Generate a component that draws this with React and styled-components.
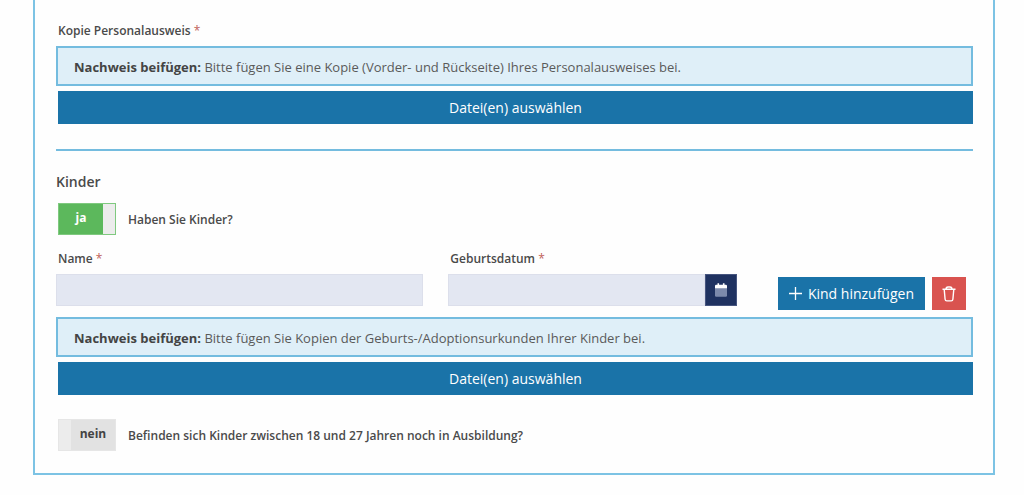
import { createGlobalStyle, styled } from 'styled-components'
import { useState } from 'react'

function UploadField({ children }) {
  return (
    <Upload>
      <Notice>
        <strong>Nachweis beifügen:</strong> {children}
      </Notice>
      <UploadButton type="button">Datei(en) auswählen</UploadButton>
    </Upload>
  )
}

function Toggle({ children, defaultOn }) {
  const [on, setOn] = useState(defaultOn)

  return (
    <ToggleRow>
      <Switch $on={on}>
        <Knob type="checkbox" checked={on} onChange={(e) => setOn(e.target.checked)} />
        <SwitchText>{on ? 'ja' : 'nein'}</SwitchText>
      </Switch>
      <ToggleLabel>{children}</ToggleLabel>
    </ToggleRow>
  )
}

export default function App() {
  const [name, setName] = useState('')
  const [birthday, setBirthday] = useState('')

  return (
    <>
      <GlobalStyle />
      <Panel>
        <Label as="div">
          Kopie Personalausweis <Required>*</Required>
        </Label>
        <UploadField>Bitte fügen Sie eine Kopie (Vorder- und Rückseite) Ihres Personalausweises bei.</UploadField>
        <Divider />
        <Heading>Kinder</Heading>
        <Toggle defaultOn={true}>Haben Sie Kinder?</Toggle>
        <ChildRow>
          <Field>
            <Label htmlFor="name">
              Name <Required>*</Required>
            </Label>
            <TextInput id="name" type="text" value={name} onChange={(e) => setName(e.target.value)} />
          </Field>
          <Field>
            <Label htmlFor="birthday">
              Geburtsdatum <Required>*</Required>
            </Label>
            <DateGroup>
              <TextInput id="birthday" type="text" value={birthday} onChange={(e) => setBirthday(e.target.value)} />
              <DateButton type="button" aria-label="Kalender öffnen">
                <svg width="12" height="14" viewBox="0 0 12 14">
                  <path d="M0 5h12v7.5a1.2 1.2 0 0 1-1.2 1.2H1.2A1.2 1.2 0 0 1 0 12.5z" fill="#7c8aab" />
                  <path d="M0 5.2V3a1.2 1.2 0 0 1 1.2-1.2h1.3V.3h1.600v1.500h3.800V.3h1.600v1.500h1.300A1.2 1.2 0 0 1 12 3v2.2z" fill="#fff" />
                </svg>
              </DateButton>
            </DateGroup>
          </Field>
          <Actions>
            <AddButton type="button">
              <svg width="13" height="13" viewBox="0 0 13 13" stroke="currentColor" strokeWidth="1.3">
                <path d="M6.5 0v13M0 6.5h13" />
              </svg>
              Kind hinzufügen
            </AddButton>
            <DeleteButton type="button" aria-label="Kind entfernen">
              <svg width="14" height="16" viewBox="0 0 14 16" fill="none" stroke="currentColor" strokeWidth="1.4">
                <path d="M.5 3.3h13M4 3.3c0-1.5.8-2.300 2-2.300h2c1.200 0 2 .8 2 2.300M2.200 3.300l.9 10c.1 1.1.7 1.6 1.7 1.6h4.400c1 0 1.600-.5 1.700-1.600l.9-10" />
              </svg>
            </DeleteButton>
          </Actions>
        </ChildRow>
        <UploadField>Bitte fügen Sie Kopien der Geburts-/Adoptionsurkunden Ihrer Kinder bei.</UploadField>
        <LastToggle>
          <Toggle defaultOn={false}>Befinden sich Kinder zwischen 18 und 27 Jahren noch in Ausbildung?</Toggle>
        </LastToggle>
      </Panel>
    </>
  )
}

const GlobalStyle = createGlobalStyle`
  * {
    box-sizing: border-box;
  }
  body {
    margin: 0;
    background: #fefefe;
    color: #4a4a4a;
    font-family: 'Open Sans', 'Noto Sans', sans-serif;
    font-size: 13px;
  }
  button,
  input {
    font-family: inherit;
  }
  button {
    cursor: pointer;
  }
  svg {
    display: block;
    flex: none;
  }
`

const Panel = styled.form`
  margin: 0 29px 20px 33px;
  padding: 21px 20px 22px 21px;
  border: 2px solid #7cc3e4;
  border-top: none;
`

const Label = styled.label`
  display: block;
  padding: 0 2px;
  font-size: 12px;
  font-weight: 600;
  line-height: 20px;
`

const Required = styled.span`
  color: #c0605a;
  font-weight: 400;
`

const Upload = styled.div`
  display: flex;
  flex-direction: column;
  gap: 5px;
  margin-top: 5px;
`

const Notice = styled.div`
  padding: 9px 16px 7px;
  border: 2px solid #74bcdf;
  background: #dfeff8;
  color: #5a5a5a;
  line-height: 20px;
  & strong {
    color: #444;
  }
`

const UploadButton = styled.button`
  height: 33px;
  margin-left: 2px;
  border: none;
  background: #1a73a8;
  color: #fff;
  font-size: 14px;
`

const Divider = styled.hr`
  height: 2px;
  margin: 25px 0 20px;
  border: none;
  background: #74bcdf;
`

const Heading = styled.h2`
  margin: 0 0 10px;
  font-size: 14px;
  font-weight: 600;
  line-height: 22px;
`

const ToggleRow = styled.label`
  display: flex;
  align-items: center;
  gap: 12px;
  margin-left: 2px;
  cursor: pointer;
`

const Switch = styled.span`
  display: flex;
  flex-direction: ${(props) => (props.$on ? 'row-reverse' : 'row')};
  width: 58px;
  height: 32px;
  border: 1px solid ${(props) => (props.$on ? '#7fc97f' : '#e6e6e6')};
  background: ${(props) => (props.$on ? '#5cb85c' : '#e2e2e2')};
  color: ${(props) => (props.$on ? '#fff' : '#444')};
`

const Knob = styled.input`
  appearance: none;
  width: 12px;
  height: 100%;
  margin: 0;
  background: #ececec;
  cursor: pointer;
`

const SwitchText = styled.span`
  flex: 1;
  font-size: 12px;
  font-weight: 700;
  line-height: 28px;
  text-align: center;
`

const ToggleLabel = styled.span`
  font-size: 12px;
  font-weight: 600;
`

const ChildRow = styled.div`
  display: grid;
  grid-template-columns: 56fr 44fr auto;
  column-gap: 25px;
  margin: 14px 0 7px;
`

const Field = styled.div`
  display: flex;
  flex-direction: column;
  gap: 5px;
  min-width: 0;
`

const TextInput = styled.input`
  width: 100%;
  min-width: 0;
  height: 32px;
  padding: 0 10px;
  border: 1px solid #dcdfeb;
  background: #e3e7f2;
  font-size: 13px;
`

const DateGroup = styled.div`
  display: flex;
`

const DateButton = styled.button`
  display: flex;
  flex: none;
  align-items: center;
  justify-content: center;
  width: 32px;
  border: 1px solid #46557f;
  background: #1f3260;
  padding: 0;
`

const Actions = styled.div`
  display: flex;
  align-items: flex-start;
  gap: 7px;
  padding: 28px 7px 0 16px;
`

const ActionButton = styled.button`
  display: flex;
  align-items: center;
  justify-content: center;
  height: 33px;
  border: none;
  color: #fff;
`

const AddButton = styled(ActionButton)`
  gap: 6px;
  padding: 0 11px;
  background: #1a73a8;
  font-size: 14px;
  white-space: nowrap;
`

const DeleteButton = styled(ActionButton)`
  width: 34px;
  padding: 0;
  background: #d9534f;
`

const LastToggle = styled.div`
  margin-top: 24px;
`
